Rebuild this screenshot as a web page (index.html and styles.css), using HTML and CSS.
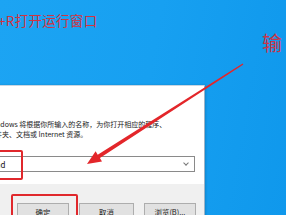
FILE: index.html
```html
<!DOCTYPE html>
<html lang="zh-CN">
<head>
<meta charset="utf-8">
<link rel="stylesheet" href="styles.css">
</head>
<body>
<div class="page">
  <div class="caption">+R打开运行窗口</div>
  <div class="dialog">
    <div class="titlebar"></div>
    <div class="desc">Windows 将根据你所输入的名称，为你打开相应的程序、<br>文件夹、文档或 Internet 资源。</div>
    <div class="inputrow">
      <div class="input"><span class="val">cmd</span><span class="chev"></span></div>
    </div>
    <div class="footer">
      <div class="btn b1">确定</div>
      <div class="btn b2">取消</div>
      <div class="btn b3">浏览(B)...</div>
    </div>
  </div>
  <div class="bigchar">输</div>
  <div class="mark mark-input"></div>
  <div class="mark mark-ok"></div>
  <svg class="arrow" width="286" height="215" viewBox="0 0 286 215">
    <polygon points="243.4,64.6 242.6,63.4 97.7,154.7 95.6,151.3 87,164 102,161.5 99.9,158.1" fill="#e3262a"/>
  </svg>
</div>
</body>
</html>
```
FILE: styles.css
```css
html, body {
  margin: 0;
  padding: 0;
}
body {
  width: 286px;
  height: 215px;
  overflow: hidden;
  background: #18a0f0;
  font-family: "Noto Sans CJK SC", "Noto Sans", sans-serif;
}
.page {
  position: relative;
  width: 286px;
  height: 215px;
  overflow: hidden;
  background: linear-gradient(100deg, #1ca4f3 0%, #17a0f1 50%, #0f98ec 100%);
}
.caption {
  height: 85px;
  box-sizing: border-box;
  padding-top: 12px;
  margin-left: -2px;
  font-size: 13.5px;
  line-height: 16px;
  color: #d2333f;
  letter-spacing: 0.3px;
}
.dialog {
  margin-left: -60px;
  width: 265px;
  height: 140px;
  background: #ffffff;
  border-top: 1px solid #c9d6e2;
  border-right: 1px solid #9bb3c8;
  box-sizing: border-box;
  box-shadow: 1px 0 2px rgba(0, 0, 0, 0.15);
  display: flex;
  flex-direction: column;
}
.titlebar {
  height: 34px;
  flex: none;
}
.desc {
  padding-left: 48px;
  font-size: 7px;
  line-height: 9.5px;
  color: #1a1a1a;
  white-space: nowrap;
}
.inputrow {
  margin-top: 17px;
  padding-left: 47px;
  padding-right: 9px;
}
.input {
  height: 16px;
  box-sizing: border-box;
  border: 1px solid #8a8a8a;
  border-left: none;
  display: flex;
  align-items: center;
  justify-content: space-between;
  padding: 0 6px 0 2px;
  font-size: 8px;
  color: #111;
}
.chev {
  width: 3px;
  height: 3px;
  border-right: 1px solid #777;
  border-bottom: 1px solid #777;
  transform: rotate(45deg);
  margin-top: -3px;
}
.footer {
  margin-top: 12px;
  flex: 1;
  background: #f0f0f0;
  display: flex;
  justify-content: flex-end;
  gap: 10px;
  padding: 19px 8px 0 0;
}
.btn {
  height: 17px;
  box-sizing: border-box;
  background: #e1e1e1;
  border: 1px solid #adadad;
  font-size: 7.4px;
  line-height: 15px;
  text-align: center;
  color: #222;
}
.b1 { width: 52px; }
.b2 { width: 55px; }
.b3 { width: 52px; }
.bigchar {
  position: absolute;
  left: 262px;
  top: 31px;
  font-size: 20px;
  line-height: 24px;
  color: #c8364a;
}
.mark {
  position: absolute;
  border: 2px solid #e0282c;
  border-radius: 2px;
  box-sizing: border-box;
}
.mark-input {
  left: -6px;
  top: 150px;
  width: 29px;
  height: 30px;
}
.mark-ok {
  left: 11px;
  top: 194px;
  width: 67px;
  height: 30px;
}
.arrow {
  position: absolute;
  left: 0;
  top: 0;
}
```
